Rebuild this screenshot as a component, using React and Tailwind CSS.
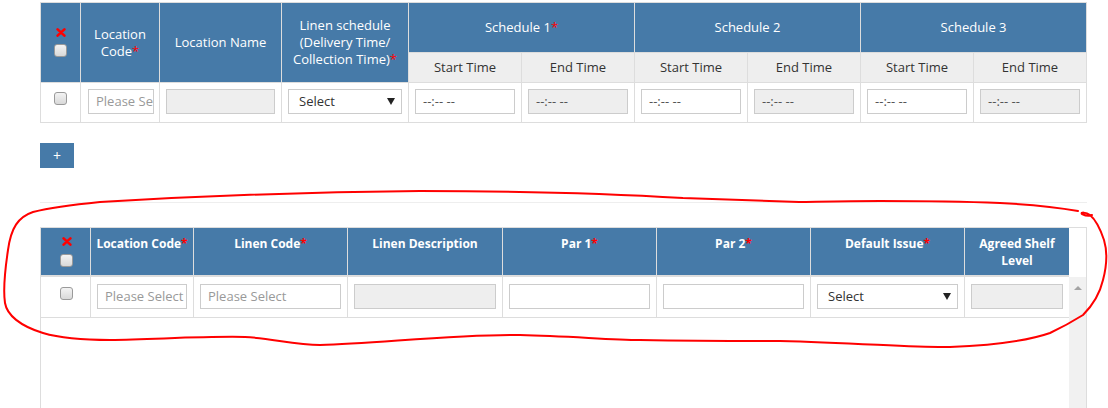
import React from "react";

const Star = () => <span className="text-[#ff0000]">*</span>;

const RedX = () => (
  <svg width="10" height="9" viewBox="0 0 10 9" className="block">
    <path d="M1.6 1.4L8.4 7.6M8.4 1.4L1.6 7.6" stroke="#f00" strokeWidth="2.6" strokeLinecap="round" />
  </svg>
);

const Checkbox = () => (
  <span className="block w-[13px] h-[13px] rounded-[3px] border border-[#9a9a9a] bg-linear-to-b from-[#f3f3f3] to-[#d9d9d9]" />
);

const TextBox = ({ placeholder, value, disabled }) => (
  <div
    className={`h-[25px] border border-[#ccc] px-[7px] flex items-center overflow-hidden whitespace-nowrap text-[13px] ${
      disabled ? "bg-[#eee]" : "bg-white"
    }`}
  >
    {placeholder && <span className="text-[#999]">{placeholder}</span>}
    {value && <span className="text-[#555]">{value}</span>}
  </div>
);

const SelectBox = () => (
  <div className="h-[25px] border border-[#ccc] bg-white pl-[10px] pr-[6px] flex items-center justify-between text-[13px] text-[#333]">
    <span>Select</span>
    <svg width="8" height="7" viewBox="0 0 8 7">
      <path d="M0 0H8L4 7Z" fill="#222" />
    </svg>
  </div>
);

const times = ["Schedule 1", "Schedule 2", "Schedule 3"];

const App = () => {
  return (
    <div className="relative w-[1108px] h-[408px] overflow-hidden bg-white font-['Open_Sans',sans-serif]">
      {/* linen schedule table */}
      <table className="ml-[40px] mt-[2px] w-[1047px] table-fixed border-separate border-spacing-0 text-[13px] leading-[17px]">
        <colgroup>
          <col className="w-[41px]" />
          <col className="w-[79px]" />
          <col className="w-[122px]" />
          <col className="w-[127px]" />
          <col className="w-[113px]" />
          <col className="w-[113px]" />
          <col className="w-[113px]" />
          <col className="w-[113px]" />
          <col className="w-[113px]" />
          <col className="w-[113px]" />
        </colgroup>
        <thead>
          <tr>
            <th rowSpan={2} className="bg-[#467aa8] border border-[#ddd] align-middle p-0">
              <div className="flex flex-col items-center gap-[7px]">
                <RedX />
                <Checkbox />
              </div>
            </th>
            <th rowSpan={2} className="bg-[#467aa8] text-white font-normal border-t border-r border-b border-[#ddd]">
              Location
              <br />
              Code<Star />
            </th>
            <th rowSpan={2} className="bg-[#467aa8] text-white font-normal border-t border-r border-b border-[#ddd]">
              Location Name
            </th>
            <th rowSpan={2} className="bg-[#467aa8] text-white font-normal border-t border-r border-b border-[#ddd]">
              Linen schedule
              <br />
              (Delivery Time/
              <br />
              Collection Time)<Star />
            </th>
            {times.map((t, i) => (
              <th
                key={t}
                colSpan={2}
                className="h-[51px] bg-[#467aa8] text-white font-normal border-t border-r border-b border-[#ddd]"
              >
                {t}
                {i === 0 && <Star />}
              </th>
            ))}
          </tr>
          <tr>
            {times.map((t) => (
              <React.Fragment key={t}>
                <th className="h-[30px] bg-[#eee] text-[#333] font-normal border-r border-b border-[#ddd]">Start Time</th>
                <th className="h-[30px] bg-[#eee] text-[#333] font-normal border-r border-b border-[#ddd]">End Time</th>
              </React.Fragment>
            ))}
          </tr>
        </thead>
        <tbody>
          <tr>
            <td className="h-[40px] border-l border-r border-b border-[#ddd] align-top pt-[9px]">
              <div className="flex justify-center">
                <Checkbox />
              </div>
            </td>
            <td className="border-r border-b border-[#ddd] align-top pt-[6px] pl-[7px] pr-[5px]">
              <TextBox placeholder="Please Select" />
            </td>
            <td className="border-r border-b border-[#ddd] align-top pt-[6px] px-[6px]">
              <TextBox disabled />
            </td>
            <td className="border-r border-b border-[#ddd] align-top pt-[6px] px-[6px]">
              <SelectBox />
            </td>
            {times.map((t) => (
              <React.Fragment key={t}>
                <td className="border-r border-b border-[#ddd] align-top pt-[6px] px-[6px]">
                  <TextBox value="--:-- --" />
                </td>
                <td className="border-r border-b border-[#ddd] align-top pt-[6px] px-[6px]">
                  <TextBox value="--:-- --" disabled />
                </td>
              </React.Fragment>
            ))}
          </tr>
        </tbody>
      </table>

      <button className="ml-[40px] mt-[20px] w-[34px] h-[25px] bg-[#467aa8] text-white text-[14px] flex items-center justify-center">
        +
      </button>

      <div className="ml-[40px] mt-[34px] w-[1047px] h-px bg-[#eee]" />

      {/* par level table */}
      <div className="ml-[40px] mt-[24px] w-[1047px] h-[260px] border border-[#ddd] flex">
        <div className="w-[1028px]">
          <table className="w-[1028px] table-fixed border-separate border-spacing-0 text-[12px] leading-[17px]">
            <colgroup>
              <col className="w-[50px]" />
              <col className="w-[103px]" />
              <col className="w-[154px]" />
              <col className="w-[155px]" />
              <col className="w-[154px]" />
              <col className="w-[154px]" />
              <col className="w-[154px]" />
              <col className="w-[104px]" />
            </colgroup>
            <thead>
              <tr className="text-white font-bold">
                <th className="h-[49px] bg-[#467aa8] border-r border-b-2 border-[#ddd] align-top pt-[9px]">
                  <div className="flex flex-col items-center gap-[8px] pl-[2px]">
                    <RedX />
                    <Checkbox />
                  </div>
                </th>
                <th className="bg-[#467aa8] border-r border-b-2 border-[#ddd] align-top pt-[7px]">
                  Location Code<Star />
                </th>
                <th className="bg-[#467aa8] border-r border-b-2 border-[#ddd] align-top pt-[7px]">
                  Linen Code<Star />
                </th>
                <th className="bg-[#467aa8] border-r border-b-2 border-[#ddd] align-top pt-[7px]">Linen Description</th>
                <th className="bg-[#467aa8] border-r border-b-2 border-[#ddd] align-top pt-[7px]">
                  Par 1<Star />
                </th>
                <th className="bg-[#467aa8] border-r border-b-2 border-[#ddd] align-top pt-[7px]">
                  Par 2<Star />
                </th>
                <th className="bg-[#467aa8] border-r border-b-2 border-[#ddd] align-top pt-[7px]">
                  Default Issue<Star />
                </th>
                <th className="bg-[#467aa8] border-b-2 border-[#ddd] align-top pt-[7px]">
                  Agreed Shelf
                  <br />
                  Level
                </th>
              </tr>
            </thead>
            <tbody>
              <tr>
                <td className="h-[41px] border-r border-b border-[#ddd] align-top pt-[10px]">
                  <div className="flex justify-center pl-[2px]">
                    <Checkbox />
                  </div>
                </td>
                <td className="border-r border-b border-[#ddd] align-top pt-[7px] px-[6px]">
                  <TextBox placeholder="Please Select" />
                </td>
                <td className="border-r border-b border-[#ddd] align-top pt-[7px] px-[6px]">
                  <TextBox placeholder="Please Select" />
                </td>
                <td className="border-r border-b border-[#ddd] align-top pt-[7px] px-[6px]">
                  <TextBox disabled />
                </td>
                <td className="border-r border-b border-[#ddd] align-top pt-[7px] px-[6px]">
                  <TextBox />
                </td>
                <td className="border-r border-b border-[#ddd] align-top pt-[7px] px-[6px]">
                  <TextBox />
                </td>
                <td className="border-r border-b border-[#ddd] align-top pt-[7px] px-[6px]">
                  <SelectBox />
                </td>
                <td className="border-b border-[#ddd] align-top pt-[7px] px-[6px]">
                  <TextBox disabled />
                </td>
              </tr>
            </tbody>
          </table>
        </div>
        <div className="w-[17px] flex flex-col">
          <div className="h-[49px] bg-white" />
          <div className="flex-1 bg-[#f1f1f1] flex justify-center pt-[9px]">
            <svg width="8" height="4" viewBox="0 0 8 4">
              <path d="M0 4L4 0L8 4Z" fill="#a3a3a3" />
            </svg>
          </div>
        </div>
      </div>

      {/* red hand-drawn annotation */}
      <svg className="absolute inset-0 pointer-events-none" width="1108" height="408" viewBox="0 0 1108 408">
        <path
          d="M1078 211 C1050 206 1020 204 1000 203 C950 201 900 201 880 201 C840 201 810 202 800 202 C760 201 720 199 683 198 C600 193 500 191 420 191 C300 192 200 196 100 202 C70 205 45 209 33 212 C18 217 11 228 8 250 C5 270 3 290 5 303 C7 315 20 326 43 333 C60 338 85 340 110 340 C160 339 210 336 245 337 C270 338 295 345 320 345 C380 343 460 334 520 335 C570 336 610 340 640 340 C700 341 750 341 780 341 C860 343 920 348 950 347 C1000 345 1030 340 1050 333 C1065 326 1075 320 1083 315 C1095 303 1100 293 1103 280 C1107 265 1107 250 1104 240 C1100 228 1096 220 1090 215 C1086 212 1080 212 1082 214 C1086 216 1090 216 1092 215"
          fill="none"
          stroke="#f00"
          strokeWidth="2"
          strokeLinecap="round"
          strokeLinejoin="round"
        />
      </svg>
    </div>
  );
};

export default App;
